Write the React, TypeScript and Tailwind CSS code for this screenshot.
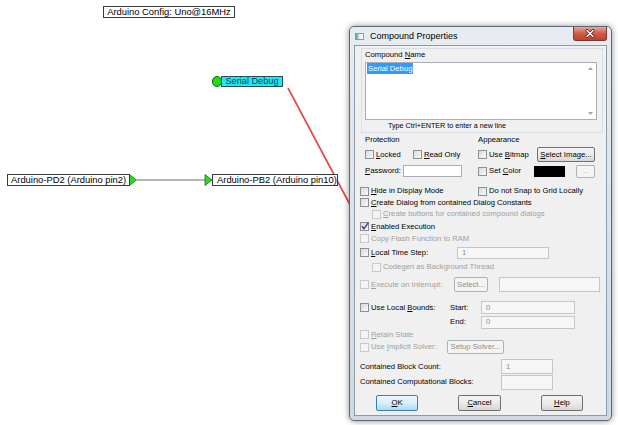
import React from "react";

type CbProps = { checked?: boolean; disabled?: boolean };
function Cb({ checked, disabled }: CbProps) {
  return (
    <span
      className={
        disabled
          ? "relative block w-[9px] h-[9px] shrink-0 border border-[#c8c9ca] bg-[#f4f4f4]"
          : "relative block w-[9px] h-[9px] shrink-0 border border-[#8e8f8f] bg-gradient-to-br from-[#d9d9d9] to-[#fbfbfb]"
      }
    >
      {checked && (
        <svg className="absolute left-[-1px] top-[-2px]" width="10" height="10" viewBox="0 0 10 10">
          <path d="M2 5.2 L4 7.8 L8.2 1.6" fill="none" stroke="#34497a" strokeWidth="1.5" />
        </svg>
      )}
    </span>
  );
}

function Btn({
  children,
  className,
  disabled,
  def,
}: {
  children: React.ReactNode;
  className: string;
  disabled?: boolean;
  def?: boolean;
}) {
  const base = "flex items-center justify-center rounded-[2px] border shrink-0 ";
  const look = def
    ? "border-[#3c7fb1] bg-gradient-to-b from-[#eaf6fd] via-[#d9f0fc] to-[#a7d9f5] text-black"
    : disabled
    ? "border-[#adb2b5] bg-[#f4f4f4] text-[#8b8b8b]"
    : "border-[#707070] bg-gradient-to-b from-[#f3f3f3] via-[#ebebeb] to-[#d6d6d6] text-black";
  return <div className={base + look + " " + className}>{children}</div>;
}

function Inp({ className, value }: { className: string; value?: string }) {
  return (
    <div className={"flex items-center shrink-0 border border-[#c3c6ca] bg-[#f6f6f6] pl-[4px] text-[#8c8c8c] " + className}>
      {value}
    </div>
  );
}

export default function App() {
  return (
    <div className="relative w-[618px] h-[425px] bg-white overflow-hidden font-['Liberation_Sans',Arial,sans-serif] text-black">
      {/* Canvas diagram */}
      <div className="absolute left-[103px] top-[6px] w-[132px] h-[12px] border border-[#3a3a3a] bg-white flex items-center justify-center text-[9.4px] leading-none">
        Arduino Config: Uno@16MHz
      </div>

      <div className="absolute left-[212px] top-[76px] w-[10px] h-[11px] rounded-full border border-[#1f5f1f] bg-[#18e018]" />
      <div className="absolute left-[221px] top-[76px] w-[62px] h-[11px] border border-[#2a4c55] bg-[#20e8f0] flex items-center justify-center text-[9.2px] leading-none text-[#103a5a]">
        Serial Debug
      </div>

      <svg className="absolute left-0 top-0" width="618" height="425">
        <line x1="288" y1="88" x2="356" y2="216" stroke="#e24848" strokeWidth="1.6" />
        <line x1="137" y1="180" x2="205" y2="180" stroke="#6e6e6e" strokeWidth="1" />
        <polygon points="129.5,174.5 136.5,180 129.5,185.5" fill="#22dd22" stroke="#2a6a2a" strokeWidth="0.8" />
        <polygon points="205,174.5 212,180 205,185.5" fill="#22dd22" stroke="#2a6a2a" strokeWidth="0.8" />
      </svg>

      <div className="absolute left-[7px] top-[174px] w-[123px] h-[12px] border border-[#3a3a3a] bg-white flex items-center pl-[3px] text-[9.4px] leading-none">
        Arduino-PD2 (Arduino pin2)
      </div>
      <div className="absolute left-[212px] top-[174px] w-[126px] h-[12px] border border-[#3a3a3a] bg-white flex items-center pl-[4px] text-[9.4px] leading-none whitespace-nowrap">
        Arduino-PB2 (Arduino pin10)
      </div>

      {/* Dialog window */}
      <div className="absolute left-[349px] top-[26px] w-[263px] h-[395px] rounded-[5px] border border-[#5d6874] bg-gradient-to-b from-[#e6ecf2] via-[#dae2eb] to-[#cfd9e3] shadow-[0_0_6px_rgba(0,0,0,0.45)] flex flex-col px-[4px] pb-[4px]">
        <div className="h-[18px] flex items-start shrink-0">
          <div className="h-[18px] flex items-center pl-[1px]">
            <div className="w-[9px] h-[7px] border border-[#8a9aa8] bg-gradient-to-r from-[#4aa38a] via-[#e9eef2] to-[#ffffff]" />
            <span className="ml-[6px] text-[9px] leading-none text-black">Compound Properties</span>
          </div>
          <div className="ml-auto w-[34px] h-[14px] rounded-b-[3px] border border-t-0 border-[#7a3a33] bg-gradient-to-b from-[#e8a595] via-[#cf5a48] to-[#c2402c] flex items-center justify-center">
            <svg width="10" height="9" viewBox="0 0 10 9">
              <path d="M2 1.5 L8 7.5 M8 1.5 L2 7.5" stroke="#5a1a12" strokeWidth="3" strokeLinecap="round" />
              <path d="M2 1.5 L8 7.5 M8 1.5 L2 7.5" stroke="#ffffff" strokeWidth="1.6" strokeLinecap="round" />
            </svg>
          </div>
        </div>

        <div className="flex-1 border border-[#8d9aa8] bg-[#f0f0f0] flex flex-col text-[7.7px] leading-none">
          <div className="h-[2px] shrink-0" />
          {/* Compound Name panel */}
          <div className="ml-[6px] w-[242px] h-[85px] shrink-0 border border-[#d5dfe5] flex flex-col">
            <div className="h-[12px] flex items-center pl-[3px] whitespace-pre">
              <span>Compound <u>N</u>ame</span>
            </div>
            <div className="ml-[3px] mt-[1px] w-[232px] h-[58px] border border-[#abadb3] bg-white flex">
              <div className="flex-1 pl-[1px] pt-[2px]">
                <span className="bg-[#3399ff] text-white px-[1px] py-[1px]">Serial Debug</span>
              </div>
              <div className="w-[11px] flex flex-col items-center justify-between py-[4px]">
                <svg width="5" height="3" viewBox="0 0 5 3"><polygon points="0,3 2.5,0 5,3" fill="#a8a8a8" /></svg>
                <svg width="5" height="3" viewBox="0 0 5 3"><polygon points="0,0 2.5,3 5,0" fill="#a8a8a8" /></svg>
              </div>
            </div>
            <div className="h-[12px] flex items-center pl-[26px] text-[7.2px]">Type Ctrl+ENTER to enter a new line</div>
          </div>

          {/* Protection / Appearance labels */}
          <div className="h-[13px] shrink-0 flex items-center">
            <div className="w-[123px] pl-[10px]">Protection</div>
            <div>Appearance</div>
          </div>
          <div className="h-[17px] shrink-0 flex items-center">
            <div className="w-[123px] pl-[10px] flex items-center">
              <div className="w-[48px] flex items-center gap-[2px]">
                <Cb />
                <span><u>L</u>ocked</span>
              </div>
              <div className="flex items-center gap-[2px]">
                <Cb />
                <span><u>R</u>ead Only</span>
              </div>
            </div>
            <div className="w-[59px] flex items-center gap-[2px]">
              <Cb />
              <span>Use <u>B</u>itmap</span>
            </div>
            <Btn className="w-[58px] h-[15px]"><span><u>S</u>elect Image...</span></Btn>
          </div>
          <div className="h-[16px] shrink-0 flex items-center">
            <div className="w-[123px] pl-[10px] flex items-center">
              <div className="w-[38px]"><u>P</u>assword:</div>
              <div className="w-[59px] h-[12px] border border-[#abadb3] bg-white" />
            </div>
            <div className="w-[56px] flex items-center gap-[2px]">
              <Cb />
              <span>Set <u>C</u>olor</span>
            </div>
            <div className="w-[31px] h-[11px] bg-black shrink-0" />
            <div className="w-[11px]" />
            <Btn disabled className="w-[19px] h-[13px]"><span className="text-[6px]">...</span></Btn>
          </div>

          <div className="h-[6px] shrink-0" />
          <div className="h-[12px] shrink-0 flex items-center">
            <div className="w-[123px] pl-[5px] flex items-center gap-[2px]">
              <Cb />
              <span><u>H</u>ide in Display Mode</span>
            </div>
            <div className="flex items-center gap-[2px]">
              <Cb />
              <span>Do not Snap to Grid Locally</span>
            </div>
          </div>
          <div className="h-[11px] shrink-0 flex items-center pl-[5px] gap-[2px]">
            <Cb />
            <span><u>C</u>reate Dialog from contained Dialog Constants</span>
          </div>
          <div className="h-[12px] shrink-0 flex items-center pl-[17px] gap-[2px] text-[#a0a0a0]">
            <Cb disabled />
            <span><u>C</u>reate buttons for contained compound dialogs</span>
          </div>
          <div className="h-[13px] shrink-0 flex items-center pl-[5px] gap-[2px]">
            <Cb checked />
            <span><u>E</u>nabled Execution</span>
          </div>
          <div className="h-[11px] shrink-0 flex items-center pl-[5px] gap-[2px] text-[#a0a0a0]">
            <Cb disabled />
            <span>Copy Flash Function to RAM</span>
          </div>
          <div className="h-[17px] shrink-0 flex items-center">
            <div className="w-[102px] pl-[5px] flex items-center gap-[2px]">
              <Cb />
              <span><u>L</u>ocal Time Step:</span>
            </div>
            <Inp className="w-[92px] h-[12px]" value="1" />
          </div>
          <div className="h-[12px] shrink-0 flex items-center pl-[17px] gap-[2px] text-[#a0a0a0]">
            <Cb disabled />
            <span>Codegen as Background Thread</span>
          </div>
          <div className="h-[3px] shrink-0" />
          <div className="h-[17px] shrink-0 flex items-center text-[#a0a0a0]">
            <div className="w-[99px] pl-[5px] flex items-center gap-[2px]">
              <Cb disabled />
              <span><u>E</u>xecute on Interrupt:</span>
            </div>
            <Btn disabled className="w-[34px] h-[15px]">Select...</Btn>
            <div className="w-[11px]" />
            <Inp className="w-[101px] h-[15px]" />
          </div>
          <div className="h-[7px] shrink-0" />
          <div className="h-[15px] shrink-0 flex items-center">
            <div className="w-[95px] pl-[5px] flex items-center gap-[2px]">
              <Cb />
              <span>Use Local <u>B</u>ounds:</span>
            </div>
            <div className="w-[31px]">Start:</div>
            <Inp className="w-[94px] h-[13px]" value="0" />
          </div>
          <div className="h-[14px] shrink-0 flex items-center">
            <div className="w-[95px]" />
            <div className="w-[31px]">End:</div>
            <Inp className="w-[94px] h-[13px]" value="0" />
          </div>
          <div className="h-[11px] shrink-0 flex items-center pl-[5px] gap-[2px] text-[#a0a0a0]">
            <Cb disabled />
            <span><u>R</u>etain State</span>
          </div>
          <div className="h-[14px] shrink-0 flex items-center text-[#a0a0a0]">
            <div className="w-[92px] pl-[5px] flex items-center gap-[2px]">
              <Cb disabled />
              <span>Use <u>I</u>mplicit Solver:</span>
            </div>
            <Btn disabled className="w-[57px] h-[14px]">Setup Solver...</Btn>
          </div>
          <div className="h-[5px] shrink-0" />
          <div className="h-[15px] shrink-0 flex items-center">
            <div className="w-[146px] pl-[5px]">Contained Block Count:</div>
            <Inp className="w-[52px] h-[15px]" value="1" />
          </div>
          <div className="h-[16px] shrink-0 flex items-center">
            <div className="w-[146px] pl-[5px]">Contained Computational Blocks:</div>
            <Inp className="w-[52px] h-[15px]" />
          </div>
          <div className="h-[5px] shrink-0" />
          <div className="h-[16px] shrink-0 flex items-center">
            <div className="w-[21px]" />
            <Btn def className="w-[42px] h-[16px]"><span><u>O</u>K</span></Btn>
            <div className="w-[40px]" />
            <Btn className="w-[43px] h-[16px]"><span><u>C</u>ancel</span></Btn>
            <div className="w-[40px]" />
            <Btn className="w-[42px] h-[16px]"><span><u>H</u>elp</span></Btn>
          </div>
        </div>
      </div>
    </div>
  );
}
